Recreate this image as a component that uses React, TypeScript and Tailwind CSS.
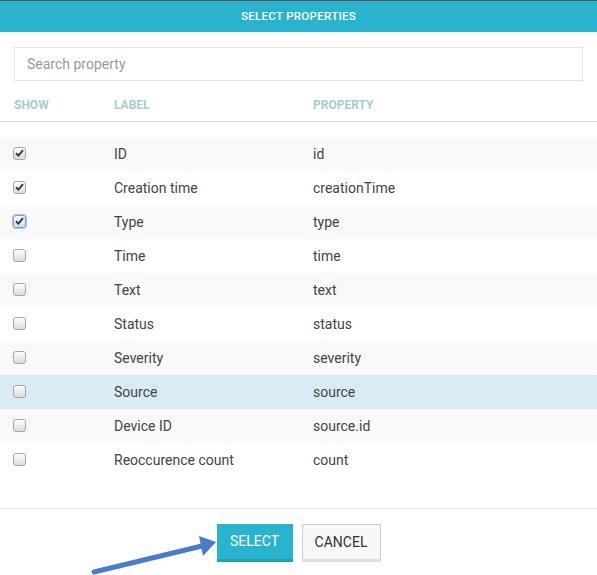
import React from "react";

const rows: { label: string; prop: string; checked: boolean; focus?: boolean }[] = [
  { label: "ID", prop: "id", checked: true },
  { label: "Creation time", prop: "creationTime", checked: true },
  { label: "Type", prop: "type", checked: true, focus: true },
  { label: "Time", prop: "time", checked: false },
  { label: "Text", prop: "text", checked: false },
  { label: "Status", prop: "status", checked: false },
  { label: "Severity", prop: "severity", checked: false },
  { label: "Source", prop: "source", checked: false },
  { label: "Device ID", prop: "source.id", checked: false },
  { label: "Reoccurence count", prop: "count", checked: false },
];

function Check({ checked, focus }: { checked: boolean; focus?: boolean }) {
  return (
    <div
      className={
        "w-[13px] h-[13px] rounded-[3px] flex items-center justify-center bg-gradient-to-b from-[#fdfdfd] to-[#dcdcdc] " +
        (focus ? "border border-[#6f9ff0] ring-1 ring-[#a9c6f7]" : "border border-[#a6a6a6]")
      }
    >
      {checked && (
        <svg width="9" height="8" viewBox="0 0 9 8">
          <path d="M1 4.2 L3.4 6.6 L8 1.2" stroke="#3a3a3a" strokeWidth="2" fill="none" />
        </svg>
      )}
    </div>
  );
}

export default function App() {
  return (
    <div
      className="w-[597px] h-[575px] bg-white relative overflow-hidden text-[#444] text-[14px]"
      style={{ fontFamily: "Roboto, 'Liberation Sans', sans-serif" }}
    >
      <div className="h-[1px] bg-[#555]" />
      <div className="h-[31px] bg-[#29b3cf] flex items-center justify-center text-white text-[11.5px] font-medium tracking-[0.3px]">
        SELECT PROPERTIES
      </div>
      <div className="px-[14px] pt-[15px]">
        <div className="h-[34px] border border-[#e3e3e3] flex items-center px-[12px] text-[#999] text-[14px]">
          Search property
        </div>
      </div>
      <div className="mt-[15px] h-[26px] border-b border-[#dcdcdc] flex items-start text-[12px] font-bold text-[#a9cbd3]">
        <div className="w-[114px] pl-[14px]">SHOW</div>
        <div className="w-[199px]">LABEL</div>
        <div>PROPERTY</div>
      </div>
      <div className="mt-[15px]">
        {rows.map((r, i) => (
          <div
            key={r.label}
            className={
              "h-[34px] flex items-center " +
              (r.label === "Source" ? "bg-[#d9ecf5]" : i % 2 === 0 ? "bg-[#f9f9f9]" : "bg-white")
            }
          >
            <div className="w-[114px] pl-[13px] -mt-[2px]">
              <Check checked={r.checked} focus={r.focus} />
            </div>
            <div className="w-[199px]">{r.label}</div>
            <div>{r.prop}</div>
          </div>
        ))}
      </div>
      <div className="mt-[31px] border-t border-[#e2e2e2] flex justify-center pt-[15px] gap-[9px]">
        <div className="w-[76px] h-[38px] bg-[#29b3cf] border-b-[3px] border-[#259fb8] flex items-center justify-center text-white text-[14px]">
          SELECT
        </div>
        <div className="w-[79px] h-[38px] bg-[#f8f8f8] border border-[#cccccc] border-b-[3px] border-b-[#e0e0e0] flex items-center justify-center text-[#333] text-[14px]">
          CANCEL
        </div>
      </div>
      <svg className="absolute left-0 top-0" width="597" height="575" style={{ pointerEvents: "none" }}>
        <line x1="94" y1="572" x2="202" y2="546" stroke="#4a7ccc" strokeWidth="5" strokeLinecap="round" />
        <polygon points="216,542 199,536 203,556" fill="#4a7ccc" />
      </svg>
    </div>
  );
}
